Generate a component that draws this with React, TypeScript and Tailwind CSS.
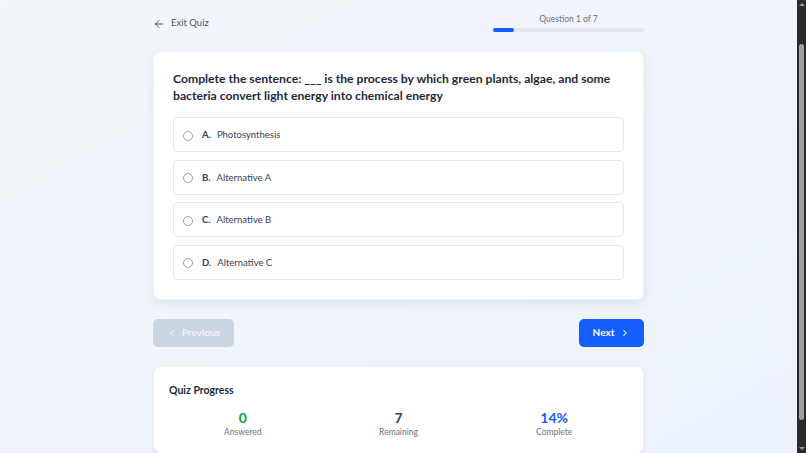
import { ArrowLeft, ChevronLeft, ChevronRight } from "lucide-react";

const OPTIONS = [
  { letter: "A", text: "Photosynthesis" },
  { letter: "B", text: "Alternative A" },
  { letter: "C", text: "Alternative B" },
  { letter: "D", text: "Alternative C" },
];

const STATS = [
  { value: "0", label: "Answered", color: "text-green-600" },
  { value: "7", label: "Remaining", color: "text-gray-700" },
  { value: "14%", label: "Complete", color: "text-blue-600" },
];

function Scrollbar() {
  return (
    <div className="flex h-full w-[9px] shrink-0 flex-col items-center bg-[#2b2b2b] py-[3px]">
      <span className="h-0 w-0 border-x-[3px] border-b-[3px] border-x-transparent border-b-[#9a9a9a]" />
      <div className="mt-[38px] h-[376px] w-[5px] rounded-full bg-[#9f9f9f]" />
      <span className="mt-auto h-0 w-0 border-x-[3px] border-t-[3px] border-x-transparent border-t-[#9a9a9a]" />
    </div>
  );
}

export default function App() {
  return (
    <div
      className="flex h-[453px] w-full overflow-hidden"
      style={{ fontFamily: "Lato, 'Liberation Sans', sans-serif" }}
    >
      <div className="flex-1 overflow-hidden bg-gradient-to-br from-[#f3f6fa] to-[#ecf2fc]">
        <div className="mx-auto w-[491px] pt-[13px]">
          {/* Header */}
          <div className="mb-[19px] flex items-center justify-between">
            <button className="flex items-center gap-[6px] pt-[2px] text-[9.5px] text-gray-600">
              <ArrowLeft size={12} strokeWidth={2} />
              Exit Quiz
            </button>
            <div className="flex w-[151px] flex-col items-center">
              <span className="text-[8.5px] leading-[12px] text-gray-500">
                Question 1 of 7
              </span>
              <div className="mt-[3px] h-[4px] w-full rounded-full bg-[#e2e8f0]">
                <div className="h-full w-[14%] rounded-full bg-blue-600" />
              </div>
            </div>
          </div>

          {/* Question card */}
          <div className="rounded-lg border border-gray-100 bg-white px-[19px] pt-[18px] pb-[19px] shadow-[0_4px_12px_rgba(15,23,42,0.08)]">
            <h2 className="mb-[13px] text-[12.2px] font-bold leading-[17px] text-gray-800">
              Complete the sentence: ___ is the process by which green plants,
              algae, and some bacteria convert light energy into chemical energy
            </h2>
            <div className="flex flex-col gap-[7.5px]">
              {OPTIONS.map((opt) => (
                <label
                  key={opt.letter}
                  className="flex h-[35px] items-center gap-[9px] rounded-[5px] border border-gray-200 bg-white px-[9px] pt-[2px]"
                >
                  <span className="h-[10px] w-[10px] rounded-full border border-gray-400" />
                  <span className="text-[9.5px] font-bold text-gray-700">
                    {opt.letter}.
                  </span>
                  <span className="-ml-[3px] text-[9.5px] text-gray-700">
                    {opt.text}
                  </span>
                </label>
              ))}
            </div>
          </div>

          {/* Navigation */}
          <div className="my-[19px] flex items-center justify-between">
            <button className="flex h-[28px] w-[81px] items-center justify-center gap-[5px] rounded-[5px] bg-[#cbd5e1] text-[10px] font-bold text-[#eef2f7]">
              <ChevronLeft size={10} strokeWidth={2.5} />
              Previous
            </button>
            <button className="flex h-[28px] w-[65px] items-center justify-center gap-[6px] rounded-[5px] bg-blue-600 text-[10px] font-bold text-white">
              Next
              <ChevronRight size={10} strokeWidth={2.5} />
            </button>
          </div>

          {/* Progress card */}
          <div className="rounded-lg border border-gray-100 bg-white px-[15px] pt-[15px] pb-[15px] shadow-sm">
            <h3 className="text-[10.5px] font-bold leading-[16px] text-gray-800">
              Quiz Progress
            </h3>
            <div className="mt-[11px] grid grid-cols-3 gap-2 text-center">
              {STATS.map((s) => (
                <div key={s.label} className="flex flex-col items-center">
                  <span className={`text-[14px] font-bold leading-[18px] ${s.color}`}>
                    {s.value}
                  </span>
                  <span className="text-[8.5px] leading-[11px] text-gray-500">
                    {s.label}
                  </span>
                </div>
              ))}
            </div>
          </div>
        </div>
      </div>
      <Scrollbar />
    </div>
  );
}
